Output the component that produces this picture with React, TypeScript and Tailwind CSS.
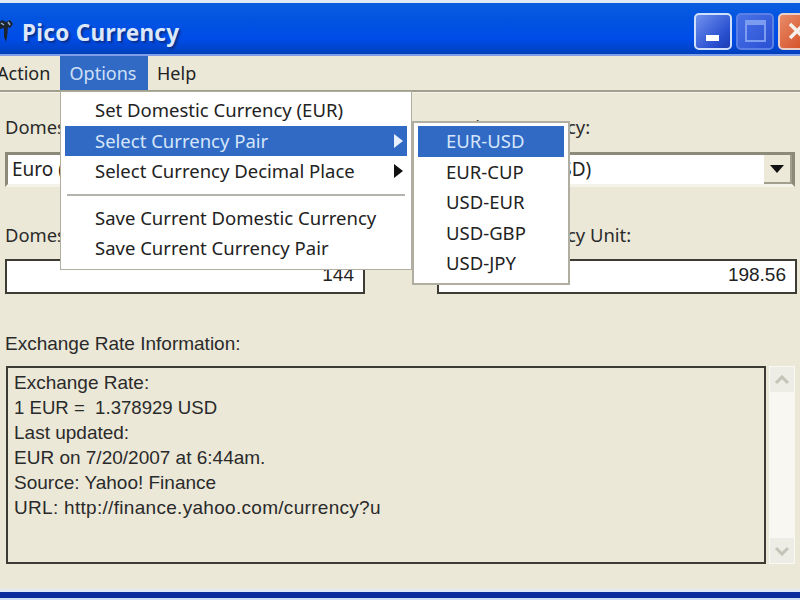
import React from 'react';

const uiFont = { fontFamily: '"Noto Sans", "DejaVu Sans", sans-serif' };

const Triangle: React.FC<{ color: string }> = ({ color }) => (
  <svg width="9" height="14" viewBox="0 0 9 14"><path d="M0 0 L9 7 L0 14 Z" fill={color} /></svg>
);

const MenuRow: React.FC<{ label: string; active?: boolean; arrow?: boolean; inset?: string }> = ({ label, active, arrow, inset = 'pl-[30px]' }) => (
  <div className={`h-[30.5px] mx-[4px] pr-[4px] flex items-center justify-between ${inset} ${active ? 'bg-[#316ac5] text-[#d6e6fa]' : 'text-[#222]'}`}>
    <span>{label}</span>
    {arrow && <Triangle color={active ? '#e8f0ff' : '#111'} />}
  </div>
);

const Field: React.FC<{ value: string }> = ({ value }) => (
  <div className="h-[35px] bg-white border-2 border-[#3c3c34] flex items-center justify-end pr-[9px] pb-[2px] text-[19px] text-[#222]">{value}</div>
);

const Combo: React.FC<{ value: string }> = ({ value }) => (
  <div className="h-[35px] mr-[2px] bg-white border-[3px] border-[#8c8a78] border-b-[#f4f3ea] flex items-center justify-between pl-[4px] text-[19px] text-[#222]" style={uiFont}>
    <span>{value}</span>
    <div className="w-[28px] h-[29px] bg-[#ece9d8] border-r-2 border-b-2 border-[#a09e8c] flex items-center justify-center">
      <svg width="14" height="8" viewBox="0 0 14 8"><path d="M0 0 H14 L7 8 Z" fill="#111" /></svg>
    </div>
  </div>
);

const ScrollButton: React.FC<{ down?: boolean }> = ({ down }) => (
  <div className="h-[27px] bg-[#eeede5] border border-[#f8f8f4] rounded-[2px] flex items-center justify-center">
    <svg width="16" height="10" viewBox="0 0 16 10">
      <path d={down ? 'M2 2 L8 8 L14 2' : 'M2 8 L8 2 L14 8'} fill="none" stroke="#c4c4b8" strokeWidth="3" />
    </svg>
  </div>
);

export default function App() {
  return (
    <div className="relative w-[800px] h-[600px] overflow-hidden bg-[#ebe8d8] flex flex-col font-['Liberation_Sans',sans-serif]">
      {/* title bar */}
      <div className="h-[56px] shrink-0 pt-[5px] border-t-[3px] border-[#dfeaf5] border-b-2 border-b-[#7f9fe8] bg-[linear-gradient(180deg,#0a5ee0_0%,#0254e0_30%,#004ce8_70%,#0040bc_100%)] flex items-center">
        <svg width="18" height="28" viewBox="0 0 18 28" className="shrink-0 -ml-[3px] mr-[7px]">
          <path d="M1 6 L5 3 L9 5 L13 3 L16 7 L13 11 L11 10 L10 20 L9 25 L7 20 L7 11 L3 12 Z" fill="#1c2430" />
          <path d="M4 6 L7 8 M11 5 L13 8" stroke="#9fb4d0" strokeWidth="1.5" />
        </svg>
        <span className="mt-[3px] text-[22.5px] font-bold text-[#dce8fa] tracking-[0.3px] [text-shadow:2px_2px_2px_#08308c]" style={uiFont}>Pico Currency</span>
        <div className="ml-auto flex gap-[4px] -mr-[16px] items-center">
          <div className="w-[38px] h-[37px] rounded-[5px] border-2 border-[#cfe0fa] bg-[linear-gradient(135deg,#6f92ee,#2a50d0_70%,#1c3cb4)] flex items-end justify-center pb-[7px] pr-[2px]">
            <div className="w-[13px] h-[6px] bg-white" />
          </div>
          <div className="w-[38px] h-[37px] rounded-[5px] border-2 border-[#5a80e6] bg-[linear-gradient(135deg,#4a72e6,#2a50d4)] flex items-center justify-center">
            <div className="w-[21px] h-[22px] border-2 border-t-[5px] border-[#7c9cf0]" />
          </div>
          <div className="w-[38px] h-[37px] rounded-[5px] border-2 border-[#e8d0c8] bg-[linear-gradient(135deg,#e88a68,#d0481c)] flex items-center justify-center">
            <svg width="20" height="20" viewBox="0 0 20 20"><path d="M3 3 L17 17 M17 3 L3 17" stroke="#f6f0ec" strokeWidth="3.5" /></svg>
          </div>
        </div>
      </div>

      {/* menu bar */}
      <div className="h-[34px] shrink-0 flex items-center text-[18px] text-[#222]" style={uiFont}>
        <div className="w-[60px] -ml-[3px] mr-[3px]">Action</div>
        <div className="h-full w-[88px] pr-[2px] bg-[#316ac5] text-[#cfe0f6] flex items-center justify-center">Options</div>
        <div className="ml-[9px]">Help</div>
      </div>
      <div className="h-[3px] shrink-0 bg-[#a09e8c] border-b border-[#f4f3ea]" />

      {/* form */}
      <div className="flex-1 px-[5px] pt-[21px] text-[18.4px] text-[#2a2a2a]">
        <div className="grid grid-cols-[360px_360px] gap-x-[72px]">
          <div>
            <div className="h-[25px] leading-[25px] mb-[13px]" style={uiFont}>Domestic Currency:</div>
            <Combo value="Euro (EUR)" />
            <div className="h-[25px] leading-[25px] mt-[35px] mb-[12px]" style={uiFont}>Domestic Currency Unit:</div>
            <Field value="144" />
          </div>
          <div>
            <div className="h-[25px] leading-[25px] mb-[13px]" style={uiFont}>Foreign Currency:</div>
            <Combo value="U.S. Dollar (USD)" />
            <div className="h-[25px] leading-[25px] mt-[35px] mb-[12px]" style={uiFont}>Foreign Currency Unit:</div>
            <Field value="198.56" />
          </div>
        </div>

        <div className="mt-[37px] h-[25px] leading-[25px] text-[19px]">Exchange Rate Information:</div>
        <div className="flex mt-[10px] gap-[3px]">
          <div className="w-[762px] h-[198px] ml-[1px] border-2 border-[#3c3c34] px-[6px] py-[2px] leading-[25px] text-[19px]">
            <div>Exchange Rate:</div>
            <div className="text-[18.6px]">1 EUR =&nbsp; 1.378929 USD</div>
            <div>Last updated:</div>
            <div>EUR on 7/20/2007 at 6:44am.</div>
            <div>Source: Yahoo! Finance</div>
            <div className="tracking-[0.3px]">URL: http://finance.yahoo.com/currency?u</div>
          </div>
          <div className="w-[26px] h-[198px] bg-[#f8f7f2] flex flex-col justify-between">
            <ScrollButton />
            <ScrollButton down />
          </div>
        </div>
      </div>

      {/* window bottom border */}
      <div className="h-[11px] shrink-0 border-t-[3px] border-[#dfeaf5] bg-[#0a2c9c] border-b-[2px] border-b-[#cfe0f6]" />

      {/* open Options menu */}
      <div className="absolute left-[60px] top-[91px] w-[352px] h-[179px] bg-white border border-[#b0aea0] pt-[3px] text-[18.5px]" style={uiFont}>
        <MenuRow label="Set Domestic Currency (EUR)" />
        <MenuRow label="Select Currency Pair" active arrow />
        <MenuRow label="Select Currency Decimal Place" arrow />
        <div className="h-[2px] bg-[#b4b4ac] mx-[6px] my-[7px]" />
        <MenuRow label="Save Current Domestic Currency" />
        <MenuRow label="Save Current Currency Pair" />
      </div>

      {/* Select Currency Pair submenu */}
      <div className="absolute left-[412px] top-[121px] w-[158px] h-[164px] bg-white border-2 border-[#b0aea0] pt-[3px] text-[18.5px]" style={uiFont}>
        <MenuRow label="EUR-USD" active inset="pl-[28px]" />
        <MenuRow label="EUR-CUP" inset="pl-[28px]" />
        <MenuRow label="USD-EUR" inset="pl-[28px]" />
        <MenuRow label="USD-GBP" inset="pl-[28px]" />
        <MenuRow label="USD-JPY" inset="pl-[28px]" />
      </div>
    </div>
  );
}
